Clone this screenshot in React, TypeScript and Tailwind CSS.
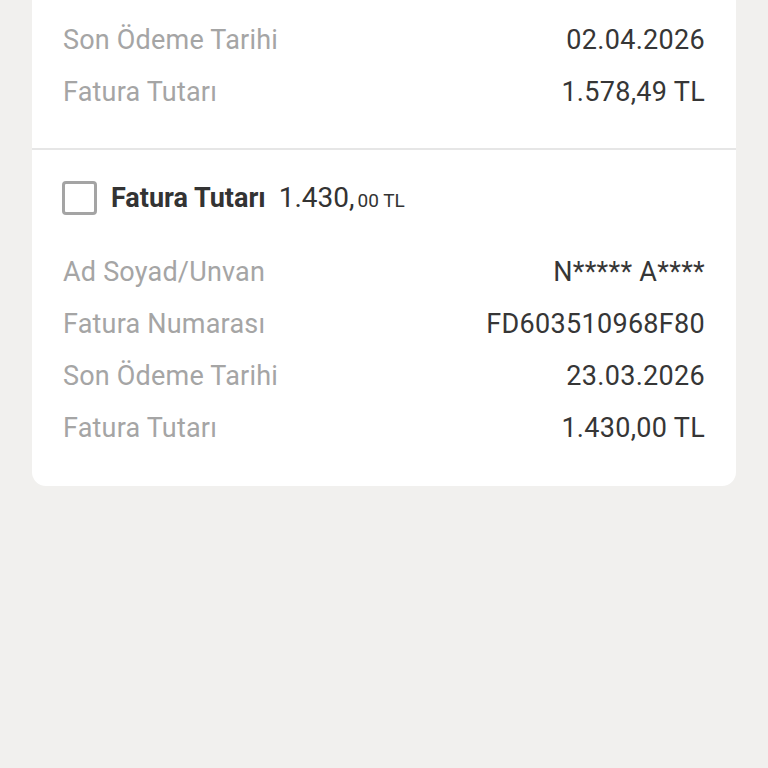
const firstRows = [
  { label: "Fatura Numarası", value: "FD60350968F79" },
  { label: "Son Ödeme Tarihi", value: "02.04.2026" },
  { label: "Fatura Tutarı", value: "1.578,49 TL" },
];

const secondRows = [
  { label: "Ad Soyad/Unvan", value: "N***** A****" },
  { label: "Fatura Numarası", value: "FD603510968F80" },
  { label: "Son Ödeme Tarihi", value: "23.03.2026" },
  { label: "Fatura Tutarı", value: "1.430,00 TL" },
];

function Row({ label, value }: { label: string; value: string }) {
  return (
    <div className="flex items-center justify-between h-[52px] text-[27px]">
      <span className="text-[#a5a5a5] tracking-[0.2px]">{label}</span>
      <span className="text-[#363636] tracking-[0.3px]">{value}</span>
    </div>
  );
}

export default function App() {
  return (
    <div
      className="h-[768px] overflow-hidden bg-[#f1f0ee]"
      style={{ fontFamily: "Roboto, 'Noto Sans', sans-serif" }}
    >
      <div className="mx-8 -mt-[38px] bg-white rounded-b-[14px]">
        {/* previous invoice */}
        <div className="px-[31px] pb-[30px]">
          {firstRows.map((r) => (
            <Row key={r.label} {...r} />
          ))}
        </div>

        <div className="h-[2px] bg-[#e6e6e6]" />

        {/* next invoice */}
        <div className="px-[31px] pt-[31px] pb-[32px]">
          <div className="flex items-center gap-[14px] h-[34px] mb-[31px] -ml-px">
            <div className="w-[35px] h-[34px] rounded-[4px] border-[3px] border-[#a4a4a4]" />
            <div className="flex items-baseline text-[#333]">
              <span className="text-[27px] font-bold">Fatura Tutarı</span>
              <span className="text-[28px] ml-[13px]">1.430,</span>
              <span className="text-[19px] ml-[3px]">00 TL</span>
            </div>
          </div>
          {secondRows.map((r) => (
            <Row key={r.label} {...r} />
          ))}
        </div>
      </div>
    </div>
  );
}
